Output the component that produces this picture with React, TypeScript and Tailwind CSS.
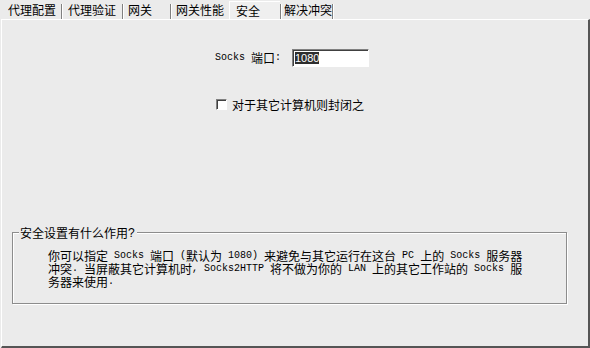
import React from "react";

const CJK = "font-['Noto_Sans_CJK_SC',sans-serif]";

function Mixed({ t }: { t: string }) {
  const parts = t.split(/([\x20-\x7e]+)/).filter((p) => p.length > 0);
  return (
    <>
      {parts.map((p, i) =>
        /^[\x20-\x7e]+$/.test(p) ? (
          <span key={i} className="font-['Liberation_Mono',monospace] text-[10px] whitespace-pre leading-none">
            {p}
          </span>
        ) : (
          <span key={i} className="text-[12px] leading-none">
            {p}
          </span>
        )
      )}
    </>
  );
}

function Sep() {
  return (
    <div className="flex self-end h-[15px]">
      <div className="w-[1px] bg-[#808080]" />
      <div className="w-[1px] bg-white" />
    </div>
  );
}

function Tab({ w, pl, label }: { w: string; pl: string; label: string }) {
  return (
    <div className={`${w} ${pl} flex items-center pt-[1px] text-[12px] leading-none`}>{label}</div>
  );
}

export default function App() {
  return (
    <div className={`w-[590px] h-[348px] bg-[#ebebeb] flex flex-col text-black ${CJK}`}>
      <div className="flex h-[19px] shrink-0">
        <Tab w="w-[61px]" pl="pl-[8px]" label="代理配置" />
        <Sep />
        <Tab w="w-[59px]" pl="pl-[5px]" label="代理验证" />
        <Sep />
        <Tab w="w-[46px]" pl="pl-[4px]" label="网关" />
        <Sep />
        <Tab w="w-[57px]" pl="pl-[4px]" label="网关性能" />
        <div className="w-[51px] border-l border-t border-white mt-[1px] pl-[6px] flex items-center text-[12px] leading-none bg-[#efefef]">
          安全
        </div>
        <Sep />
        <Tab w="w-[50px]" pl="pl-[2px]" label="解决冲突" />
        <Sep />
      </div>
      <div className="flex-1 ml-[1px] border-t border-l border-white border-r-2 border-b-2 border-r-[#555] border-b-[#555] flex flex-col">
        <div className="flex items-center mt-[29px] h-[18px]">
          <div className="pl-[213px] w-[290px] flex items-center">
            <Mixed t="Socks " />
            <span className="text-[12px] leading-none">端口</span>
            <span className="font-['Liberation_Mono',monospace] text-[10px] leading-none">:</span>
          </div>
          <div className="w-[77px] h-[18px] bg-white border-t border-l border-t-[#808080] border-l-[#808080] border-b border-r border-b-white border-r-white shadow-[inset_1px_1px_0_#404040] flex items-center pl-[2px]">
            <span className="bg-[#2e2e2e] text-white font-['Liberation_Sans',sans-serif] text-[11px] leading-[12px] h-[12px]">
              1080
            </span>
          </div>
        </div>
        <div className="flex items-center mt-[31px] h-[13px] pl-[214px]">
          <div className="w-[11px] h-[11px] bg-white border-t border-l border-t-[#808080] border-l-[#808080] border-b border-r border-b-white border-r-white shadow-[inset_1px_1px_0_#404040]" />
          <span className="ml-[5px] text-[12px] leading-none">对于其它计算机则封闭之</span>
        </div>
        <div className="mt-[121px] ml-[10px] w-[555px] h-[72px] relative border border-[#8c8c8c] shadow-[inset_1px_1px_0_#ffffff,1px_1px_0_#ffffff]">
          <div className="absolute left-[6px] top-[-7px] bg-[#ebebeb] pl-[1px] pr-[2px] h-[13px] flex items-center">
            <span className="text-[12px] leading-none">安全设置有什么作用</span>
            <span className="font-['Liberation_Sans',sans-serif] text-[12px] leading-none">?</span>
          </div>
          <div className="pt-[16px] pl-[35px] flex flex-col">
            <div className="h-[13px] flex items-center">
              <Mixed t="你可以指定 Socks 端口 (默认为 1080) 来避免与其它运行在这台 PC 上的 Socks 服务器" />
            </div>
            <div className="h-[13px] flex items-center">
              <Mixed t="冲突. 当屏蔽其它计算机时, Socks2HTTP 将不做为你的 LAN 上的其它工作站的 Socks 服" />
            </div>
            <div className="h-[13px] flex items-center">
              <Mixed t="务器来使用." />
            </div>
          </div>
        </div>
      </div>
    </div>
  );
}
